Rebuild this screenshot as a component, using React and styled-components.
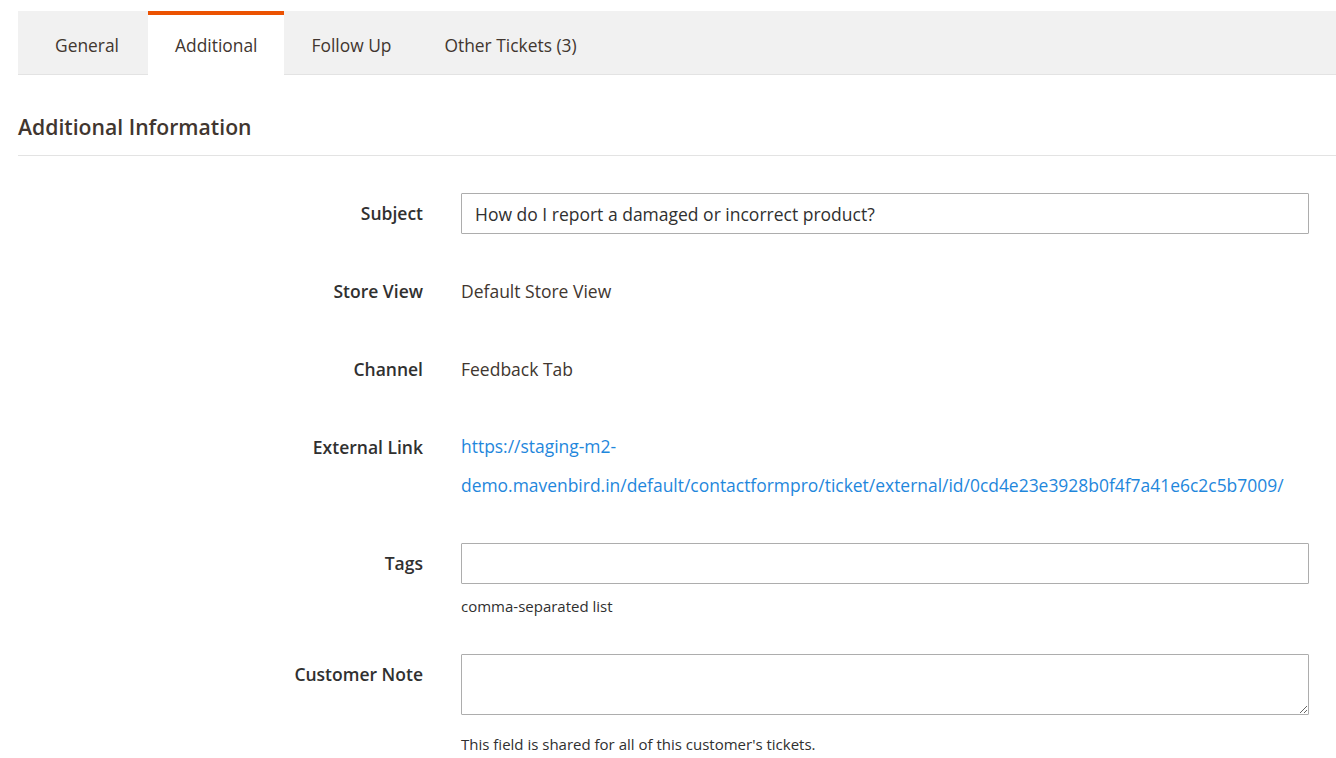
import styled, { createGlobalStyle } from "styled-components";

const GlobalStyle = createGlobalStyle`
  html, body {
    margin: 0;
    padding: 0;
    background: #ffffff;
  }
  body {
    font-family: 'Open Sans', 'Noto Sans', sans-serif;
    color: #303030;
  }
`;

const tabs = [
  { label: "General" },
  { label: "Additional", active: true },
  { label: "Follow Up" },
  { label: "Other Tickets (3)" },
];

export default function App() {
  return (
    <>
      <GlobalStyle />
      <Page>
        <TabBar>
          {tabs.map((t) => (
            <Tab key={t.label} $active={t.active}>
              {t.label}
            </Tab>
          ))}
        </TabBar>

        <SectionTitle>Additional Information</SectionTitle>

        <Form>
          <Row>
            <Label>Subject</Label>
            <Control>
              <Input defaultValue="How do I report a damaged or incorrect product?" />
            </Control>
          </Row>
          <Row>
            <Label>Store View</Label>
            <Control>
              <Value>Default Store View</Value>
            </Control>
          </Row>
          <Row>
            <Label>Channel</Label>
            <Control>
              <Value>Feedback Tab</Value>
            </Control>
          </Row>
          <Row>
            <Label>External Link</Label>
            <Control>
              <ExtLink href="#">
                https://staging-m2-demo.mavenbird.in/default/contactformpro/ticket/external/id/0cd4e23e3928b0f4f7a41e6c2c5b7009/
              </ExtLink>
            </Control>
          </Row>
          <Row>
            <Label>Tags</Label>
            <Control>
              <Input defaultValue="" />
              <Note>comma-separated list</Note>
            </Control>
          </Row>
          <Row>
            <Label>Customer Note</Label>
            <Control>
              <TextArea />
              <Note $gap={18}>This field is shared for all of this customer's tickets.</Note>
            </Control>
          </Row>
        </Form>
      </Page>
    </>
  );
}

const Page = styled.div`
  padding: 11px 0 0 18px;
  width: 1336px;
  box-sizing: border-box;
`;

const TabBar = styled.div`
  display: flex;
  height: 64px;
  padding-left: 11px;
  background: #f1f1f1;
  border-bottom: 1px solid #e3e3e3;
  box-sizing: border-box;
`;

const Tab = styled.div`
  display: flex;
  align-items: center;
  padding: 0 ${(p) => (p.$active ? 27 : 26)}px;
  margin: 0 1px ${(p) => (p.$active ? "-1px" : "0")} ${(p) => (p.$active ? 2 : 0)}px;
  font-size: 17.4px;
  color: #41362f;
  background: ${(p) => (p.$active ? "#ffffff" : "transparent")};
  border-top: 4px solid ${(p) => (p.$active ? "#eb5202" : "transparent")};
  box-sizing: border-box;
`;

const SectionTitle = styled.h2`
  margin: 0;
  padding: 37px 0 14px;
  font-size: 21.2px;
  font-weight: 600;
  color: #41362f;
  border-bottom: 1px solid #e3e3e3;
  line-height: 29px;
`;

const Form = styled.div`
  display: flex;
  flex-direction: column;
  gap: 37px;
  padding: 37px 27px 0 0;
`;

const Row = styled.div`
  display: flex;
  align-items: flex-start;
  gap: 38px;
`;

const Label = styled.div`
  width: 405px;
  flex-shrink: 0;
  text-align: right;
  font-size: 17.5px;
  font-weight: 600;
  line-height: 41px;
  color: #303030;
`;

const Control = styled.div`
  flex: 1;
  min-width: 0;
`;

const Value = styled.div`
  font-size: 17.5px;
  line-height: 41px;
  color: #41362f;
`;

const ExtLink = styled.a`
  display: block;
  padding: 0 0 1px;
  font-size: 17.45px;
  line-height: 39px;
  color: #1f87dc;
  text-decoration: none;
  word-break: break-word;
`;

const Input = styled.input`
  display: block;
  width: 100%;
  height: 41px;
  box-sizing: border-box;
  padding: 0 13px;
  border: 1px solid #adadad;
  border-radius: 1px;
  font-family: 'Open Sans', 'Noto Sans', sans-serif;
  font-size: 17.5px;
  color: #303030;
  outline: none;
`;

const TextArea = styled.textarea`
  display: block;
  width: 100%;
  height: 61px;
  box-sizing: border-box;
  padding: 8px 13px;
  border: 1px solid #adadad;
  border-radius: 1px;
  font-family: 'Open Sans', 'Noto Sans', sans-serif;
  font-size: 17.5px;
  resize: vertical;
  outline: none;
`;

const Note = styled.div`
  margin-top: ${(p) => p.$gap ?? 11}px;
  font-size: 15px;
  line-height: 22px;
  color: #303030;
`;
